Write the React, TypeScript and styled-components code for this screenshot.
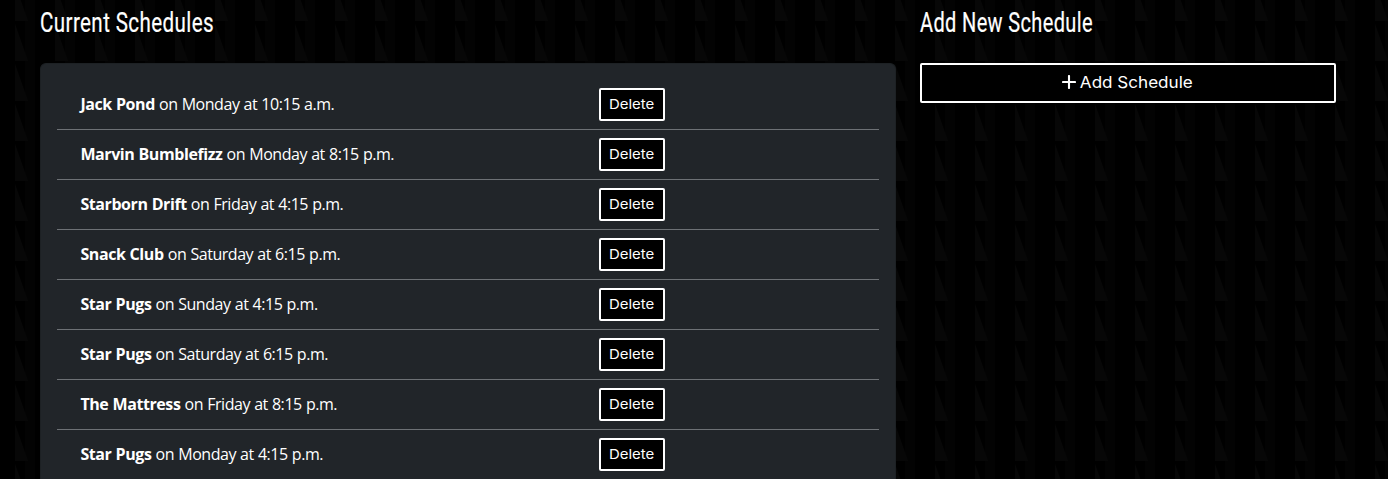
import React from "react";
import styled, { createGlobalStyle } from "styled-components";

const tile =
  "url(\"data:image/svg+xml,%3Csvg xmlns='http://www.w3.org/2000/svg' width='40' height='40'%3E%3Crect x='25' width='10' height='40' fill='%23030303'/%3E%3Cpath d='M15 24L28 61H15ZM15 -16L28 21H15Z' fill='%23070707'/%3E%3C/svg%3E\")";

const GlobalStyle = createGlobalStyle`
  * { box-sizing: border-box; }
  body {
    margin: 0;
    color: #fff;
    background: #000 ${tile};
    font: 16px/24px "Open Sans", "Noto Sans", sans-serif;
  }
`;

const Page = styled.main`
  display: grid;
  grid-template-columns: 856px 416px;
  column-gap: 24px;
  height: 100vh;
  padding: 6px 0 0 40px;
  align-items: start;
  overflow: hidden;
`;

const Column = styled.section`
  display: flex;
  flex-direction: column;
`;

const Heading = styled.h2<{ $scale: number }>`
  margin: 0 0 23px;
  font: 400 27px/34px Roboto, sans-serif;
  letter-spacing: 0.5px;
  -webkit-text-stroke: 0.2px #fff;
  white-space: nowrap;
  transform-origin: left;
  transform: scaleX(${(p) => p.$scale});
`;

const Card = styled.div`
  height: calc(100vh - 63px);
  padding: 16px 16px 0;
  background: #212529;
  border: 1px solid #1d2124;
  border-bottom: 0;
  border-radius: 6px 6px 0 0;
  overflow: hidden;
`;

const Row = styled.div`
  display: grid;
  grid-template-columns: 518px 1fr;
  align-items: center;
  height: 50px;
  padding: 0 24px;
  border-bottom: 1px solid #6d7175;

  &:last-child {
    border-bottom: 0;
    height: 49px;
  }
`;

const Label = styled.div`
  margin-left: -0.6px;
  padding-bottom: 1px;
  letter-spacing: -0.45px;
  word-spacing: 0.4px;
  white-space: nowrap;
`;

const Artist = styled.strong`
  font-weight: 700;
  letter-spacing: -0.42px;
`;

const Button = styled.button`
  display: flex;
  align-items: center;
  justify-content: center;
  padding: 0 0 2px;
  height: 40px;
  color: #fff;
  background: #000;
  border: 2px solid #fff;
  border-radius: 2px;
  font: 400 16px/24px Inter, sans-serif;
`;

const DeleteButton = styled(Button)`
  width: 66px;
  height: 33px;
  font-size: 14px;
  line-height: 21px;
`;

const ButtonText = styled.span`
  display: inline-block;
  padding-top: 2px;
  font-size: 0.97em;
  transform: scaleX(1.1);
`;

const PlusIcon = styled.svg`
  width: 14px;
  height: 14px;
  margin-right: 9px;
  margin-left: -6px;
`;

const schedules = [
  ["Jack Pond", "Monday at 10:15 a.m."],
  ["Marvin Bumblefizz", "Monday at 8:15 p.m."],
  ["Starborn Drift", "Friday at 4:15 p.m."],
  ["Snack Club", "Saturday at 6:15 p.m."],
  ["Star Pugs", "Sunday at 4:15 p.m."],
  ["Star Pugs", "Saturday at 6:15 p.m."],
  ["The Mattress", "Friday at 8:15 p.m."],
  ["Star Pugs", "Monday at 4:15 p.m."],
];

export default function App() {
  return (
    <>
      <GlobalStyle />
      <Page>
        <Column>
          <Heading $scale={0.763}>Current Schedules</Heading>
          <Card>
            {schedules.map(([artist, time], i) => (
              <Row key={i}>
                <Label>
                  <Artist>{artist}</Artist> on {time}
                </Label>
                <DeleteButton>
                  <ButtonText>Delete</ButtonText>
                </DeleteButton>
              </Row>
            ))}
          </Card>
        </Column>
        <Column>
          <Heading $scale={0.74}>Add New Schedule</Heading>
          <Button>
            <PlusIcon viewBox="0 0 14 14">
              <path d="M7 1v12M1 7h12" stroke="#fff" strokeWidth="2.1" strokeLinecap="round" />
            </PlusIcon>
            <ButtonText>Add Schedule</ButtonText>
          </Button>
        </Column>
      </Page>
    </>
  );
}
